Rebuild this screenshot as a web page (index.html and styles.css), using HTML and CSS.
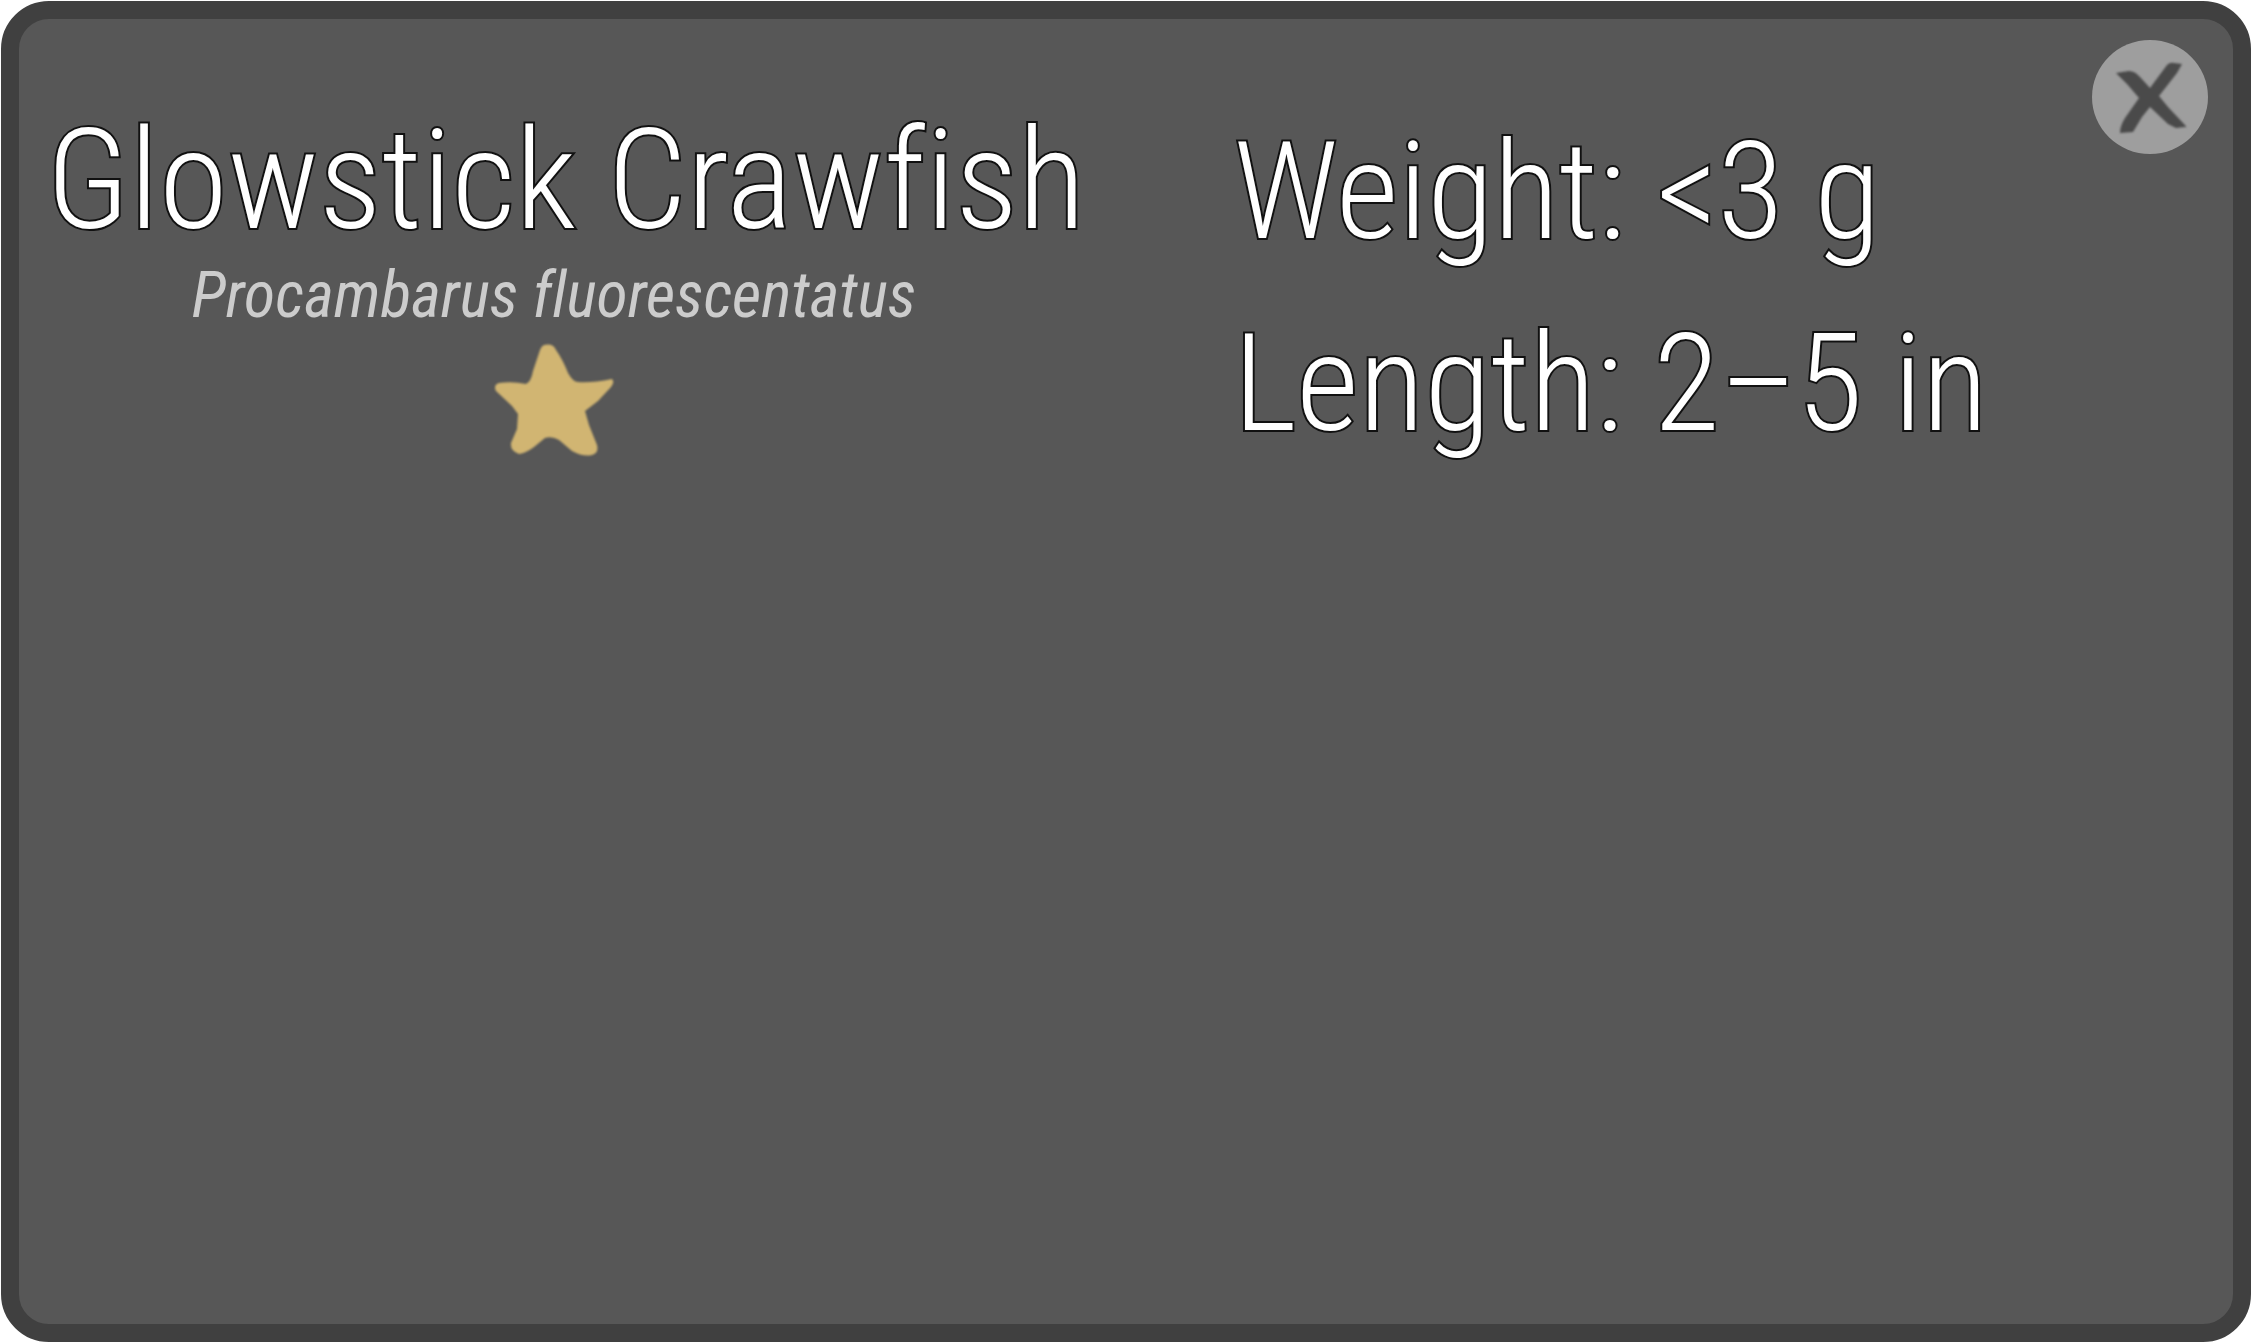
FILE: index.html
```html
<!DOCTYPE html>
<html lang="en">
<head>
<meta charset="utf-8">
<title>Glowstick Crawfish</title>
<link rel="stylesheet" href="styles.css">
</head>
<body>
<main class="card">
  <section class="identity">
    <h1 class="name">Glowstick Crawfish</h1>
    <p class="species">Procambarus fluorescentatus</p>
    <svg class="star" viewBox="0 0 120 112" role="img" aria-label="One star rating">
      <path d="M50 1 Q59 -1 62 6 Q69 16 74 29 Q79 38 84 38 Q98 39 118 35 Q121 38 117 43 L104 57 L91 67 L95 81 L103 101 Q105 109 98 111 Q89 113 78 107 L65 96 Q58 92 51 94 L40 103 Q32 109 25 110 Q16 107 17 99 L23 85 L24 70 L18 62 L2 47 Q-1 41 5 39 Q18 37 32 40 Q37 38 39 27 L45 9 Q47 2 50 1 Z"/>
    </svg>
  </section>
  <section class="stats">
    <p class="stat">Weight: &lt;3 g</p>
    <p class="stat">Length: 2–5 in</p>
  </section>
  <button class="close" type="button" aria-label="Close">
    <svg class="close-icon" viewBox="0 0 118 114" aria-hidden="true">
      <ellipse class="disc" cx="59" cy="57" rx="58" ry="57"/>
      <path class="cross" d="M25 33 L38 31 Q44 31 49 37 L59 48 L76 25 Q79 22 83 23 L91 24 L86 33 L68 56 L77 67 L93 84 Q97 88 94 87 L85 88 L77 84 L59 67 L51 77 L42 92 L29 93 Q29 86 34 78 L48 58 L36 44 Z"/>
    </svg>
  </button>
</main>
</body>
</html>
```
FILE: styles.css
```css
* {
  box-sizing: border-box;
}

body {
  margin: 0;
  background: #fff;
  font-family: "Roboto Condensed", Roboto, sans-serif;
  font-variant-ligatures: none;
}

.card {
  display: grid;
  grid-template-columns: 55% 1fr auto;
  align-items: start;
  min-height: calc(100vh - 2px);
  margin: 1px;
  padding: 21px 24px 20px 22px;
  border: 18px solid #404040;
  border-radius: 48px;
  background: #575757;
  color: #fff;
}

.identity {
  display: flex;
  flex-direction: column;
  align-items: center;
  padding: 60px 14% 0 0;
}

.name,
.species,
.stat {
  margin: 0;
  white-space: nowrap;
}

.name,
.stat {
  font-weight: 350;
  -webkit-text-stroke: 4px #111;
  paint-order: stroke fill;
}

.name {
  padding-left: 24px;
  font-size: 140px;
  line-height: 160px;
}

.species {
  color: #ccc;
  font-size: 64px;
  font-style: italic;
  font-weight: 400;
  line-height: 72px;
}

.star {
  width: 120px;
  height: 112px;
  margin-top: 12px;
  fill: #d1b572;
  filter: blur(1px);
}

.stats {
  padding-top: 56px;
}

.stat {
  font-size: 136px;
  line-height: 192px;
}

.close {
  width: 118px;
  height: 114px;
  padding: 0;
  border: 0;
  background: none;
  cursor: pointer;
}

.close-icon {
  display: block;
  width: 100%;
  height: 100%;
}

.disc {
  fill: #9e9e9e;
}

.cross {
  fill: #4a4a4a;
  filter: blur(1px);
}
```
